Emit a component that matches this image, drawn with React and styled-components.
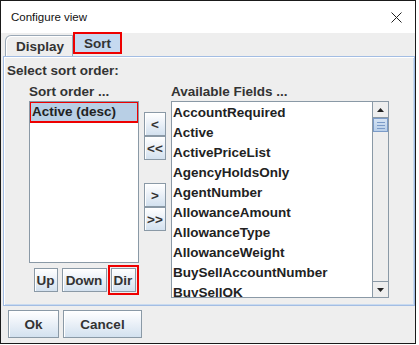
import React from 'react';
import styled, { createGlobalStyle } from 'styled-components';

const GlobalStyle = createGlobalStyle`
  body {
    margin: 0;
    background: #ffffff;
    font-family: 'Liberation Sans', Arial, sans-serif;
  }
`;

const Window = styled.div`
  width: 416px;
  height: 344px;
  box-sizing: border-box;
  border: 1px solid #1a1a1a;
  display: flex;
  flex-direction: column;
  background: #eeeeee;
`;

const TitleBar = styled.div`
  height: 32px;
  background: #ffffff;
  display: flex;
  align-items: center;
  justify-content: space-between;
  padding: 0 13px 0 10px;
  font-size: 11.5px;
  color: #111;
`;

const Body = styled.div`
  flex: 1;
  display: flex;
  flex-direction: column;
  padding: 0 0 0 2px;
`;

const TabRow = styled.div`
  height: 23px;
  display: flex;
  align-items: flex-end;
  padding-left: 2px;
`;

const Tab = styled.div`
  box-sizing: border-box;
  height: ${(p) => (p.selected ? 22 : 21)}px;
  width: ${(p) => p.w}px;
  padding-left: ${(p) => p.pl}px;
  display: flex;
  align-items: center;
  font-size: 13.5px;
  font-weight: bold;
  color: #333;
  background: ${(p) => (p.selected ? '#c5d9f0' : '#eeeeee')};
  border: ${(p) => (p.marked ? '2px solid #ee0000' : '1px solid #9aa8b6')};
  border-bottom: ${(p) => (p.marked ? '2px solid #ee0000' : 'none')};
  border-top-left-radius: ${(p) => (p.marked ? 0 : 6)}px;
  box-shadow: ${(p) => (p.marked ? 'none' : 'inset 1px 1px 0 #ffffff')};
  margin-bottom: ${(p) => (p.marked ? 2 : 0)}px;
`;

const Panel = styled.div`
  box-sizing: border-box;
  width: 412px;
  height: 250px;
  border: 1px solid #a3bde3;
  box-shadow: inset 1px 1px 0 #ffffff, inset -1px -1px 0 #c8daf0;
  padding: 6px 0 0 1px;
  display: flex;
  flex-direction: column;
`;

const Header = styled.div`
  font-size: 13.5px;
  font-weight: bold;
  color: #333;
  line-height: 16px;
  margin-left: 2px;
`;

const Columns = styled.div`
  display: flex;
  margin: 5px 0 0 24px;
`;

const Column = styled.div`
  display: flex;
  flex-direction: column;
  width: ${(p) => p.w}px;
  margin-left: ${(p) => p.ml || 0}px;
  padding-top: ${(p) => p.pt || 0}px;
`;

const Label = styled.div`
  font-size: 13.5px;
  font-weight: bold;
  color: #333;
  line-height: 16px;
  margin-bottom: 1px;
  white-space: nowrap;
`;

const ListBox = styled.div`
  box-sizing: border-box;
  height: ${(p) => p.h}px;
  background: #ffffff;
  border: 1px solid #8a99a6;
  display: flex;
  overflow: hidden;
`;

const Items = styled.div`
  flex: 1;
  overflow: hidden;
  display: flex;
  flex-direction: column;
  padding-top: ${(p) => p.pt || 0}px;
`;

const Item = styled.div`
  flex: none;
  height: 20px;
  line-height: 20px;
  padding-left: ${(p) => (p.selected ? 2 : 1)}px;
  font-size: 13.5px;
  font-weight: bold;
  color: #222;
  white-space: nowrap;
  background: ${(p) => (p.selected ? '#b8cfe5' : 'transparent')};
  outline: ${(p) => (p.marked ? '2px solid #ee0000' : 'none')};
  outline-offset: -1px;
`;

const ScrollBar = styled.div`
  width: 15px;
  border-left: 1px solid #8a99a6;
  background: #eeeeee;
  display: flex;
  flex-direction: column;
`;

const ArrowBtn = styled.div`
  height: 16px;
  box-sizing: border-box;
  display: flex;
  align-items: center;
  justify-content: center;
  background: #eeeeee;
  border-top: ${(p) => (p.down ? '1px solid #8a99a6' : 'none')};
  border-bottom: ${(p) => (p.down ? 'none' : '1px solid #8a99a6')};
`;

const Thumb = styled.div`
  height: 14px;
  box-sizing: border-box;
  border: 1px solid #7b9bc8;
  background: linear-gradient(#d5e3f3, #b8cfe9);
  display: flex;
  flex-direction: column;
  justify-content: center;
  align-items: center;
  gap: 2px;
`;

const Grip = styled.div`
  width: 8px;
  height: 1px;
  background: #7b9bc8;
`;

const Track = styled.div`
  flex: 1;
`;

const Button = styled.button`
  box-sizing: border-box;
  width: ${(p) => p.w}px;
  height: ${(p) => p.h || 24}px;
  margin: 0;
  padding: 0;
  font-family: 'Liberation Sans', Arial, sans-serif;
  font-size: 13.5px;
  font-weight: bold;
  color: #333;
  border: 1px solid #8a99a6;
  background: linear-gradient(#ffffff 0%, #eef3f9 40%, #d3e1ef 100%);
  box-shadow: inset 1px 1px 0 #ffffff;
  outline: ${(p) => (p.marked ? '2px solid #ee0000' : 'none')};
  outline-offset: 1px;
  display: flex;
  align-items: center;
  justify-content: center;
`;

const ButtonRow = styled.div`
  display: flex;
  justify-content: center;
  gap: 4px;
  margin-top: 5px;
  padding-left: 1px;
`;

const MoveGap = styled.div`
  height: 23px;
`;

const Footer = styled.div`
  display: flex;
  gap: 4px;
  padding: 4px 0 0 5px;
`;

const Close = () => (
  <svg width="11" height="11" viewBox="0 0 11 11">
    <path d="M0.5 0.5 L10.5 10.5 M10.5 0.5 L0.5 10.5" stroke="#222" strokeWidth="1" />
  </svg>
);

const Triangle = ({ down }) => (
  <svg width="7" height="4" viewBox="0 0 7 4">
    <path d={down ? 'M0 0 H7 L3.5 4 Z' : 'M0 4 H7 L3.5 0 Z'} fill="#222" />
  </svg>
);

const fields = [
  'AccountRequired',
  'Active',
  'ActivePriceList',
  'AgencyHoldsOnly',
  'AgentNumber',
  'AllowanceAmount',
  'AllowanceType',
  'AllowanceWeight',
  'BuySellAccountNumber',
  'BuySellOK',
];

const App = () => {
  return (
    <>
      <GlobalStyle />
      <Window>
        <TitleBar>
          <span>Configure view</span>
          <Close />
        </TitleBar>
        <Body>
          <TabRow>
            <Tab w={68} pl={10}>Display</Tab>
            <Tab w={49} pl={9} selected marked>Sort</Tab>
          </TabRow>
          <Panel>
            <Header>Select sort order:</Header>
            <Columns>
              <Column w={110}>
                <Label>Sort order ...</Label>
                <ListBox h={162}>
                  <Items>
                    <Item selected marked>Active (desc)</Item>
                  </Items>
                </ListBox>
                <ButtonRow>
                  <Button w={24}>Up</Button>
                  <Button w={45}>Down</Button>
                  <Button w={25} marked>Dir</Button>
                </ButtonRow>
              </Column>
              <Column w={22} ml={5} pt={28}>
                <Button w={22}>&lt;</Button>
                <Button w={22}>&lt;&lt;</Button>
                <MoveGap />
                <Button w={22}>&gt;</Button>
                <Button w={22}>&gt;&gt;</Button>
              </Column>
              <Column w={218} ml={5}>
                <Label>Available Fields ...</Label>
                <ListBox h={197}>
                  <Items pt={1}>
                    {fields.map((f) => (
                      <Item key={f}>{f}</Item>
                    ))}
                  </Items>
                  <ScrollBar>
                    <ArrowBtn>
                      <Triangle />
                    </ArrowBtn>
                    <Thumb>
                      <Grip />
                      <Grip />
                      <Grip />
                    </Thumb>
                    <Track />
                    <ArrowBtn down>
                      <Triangle down />
                    </ArrowBtn>
                  </ScrollBar>
                </ListBox>
              </Column>
            </Columns>
          </Panel>
          <Footer>
            <Button w={51} h={28}>Ok</Button>
            <Button w={79} h={28}>Cancel</Button>
          </Footer>
        </Body>
      </Window>
    </>
  );
};

export default App;
